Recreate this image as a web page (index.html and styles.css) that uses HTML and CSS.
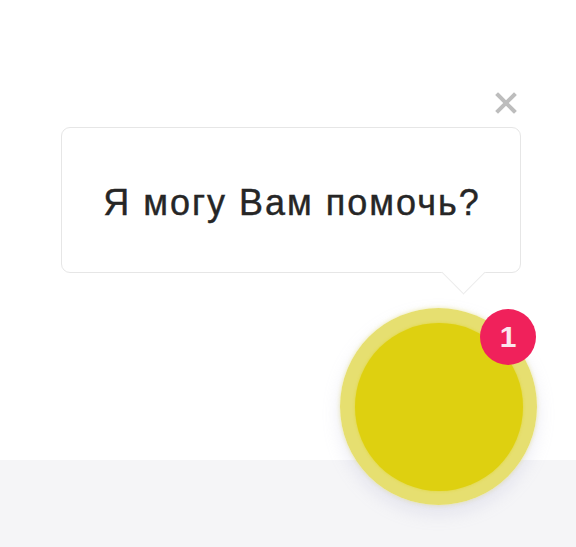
FILE: index.html
```html
<!DOCTYPE html>
<html lang="ru">
<head>
<meta charset="utf-8">
<link rel="stylesheet" href="styles.css">
</head>
<body>
<div class="page">
  <div class="top"></div>
  <div class="band"></div>
</div>
<div class="widget">
  <svg class="close" width="22" height="22" viewBox="0 0 22 22"><path d="M3 3L19 19M19 3L3 19" stroke="#bdbdbd" stroke-width="4" stroke-linecap="square"/></svg>
  <div class="bubble">Я могу Вам помочь?</div>
  <div class="btn">
    <div class="core"></div>
    <div class="badge">1</div>
  </div>
</div>
</body>
</html>
```
FILE: styles.css
```css
html, body { margin: 0; padding: 0; }
body { width: 576px; height: 547px; overflow: hidden; background: #fff; font-family: "Liberation Sans", Arial, sans-serif; position: relative; }
.page { display: flex; flex-direction: column; height: 547px; }
.top { height: 460px; background: #fff; }
.band { flex: 1; background: #f5f5f7; }
.widget { position: absolute; left: 0; top: 0; width: 576px; height: 547px; }
.close { position: absolute; left: 495px; top: 92px; }
.bubble {
  position: absolute; left: 61px; top: 127px; width: 460px; height: 146px;
  border: 1.5px solid #e6e6e6; border-radius: 9px; background: #fff;
  display: flex; align-items: center; justify-content: center;
  font-size: 36px; letter-spacing: 2px; color: #262626;
  -webkit-text-stroke: 0.4px #262626;
  box-sizing: border-box; padding-top: 6px; padding-left: 2px;
}
.bubble::after {
  content: ""; position: absolute; left: 386px; bottom: -16px;
  width: 30px; height: 30px; background: #fff;
  border-right: 1.5px solid #ececec; border-bottom: 1.5px solid #ececec;
  transform: rotate(45deg);
}
.btn {
  position: absolute; left: 340px; top: 308px; width: 197px; height: 197px;
  border-radius: 50%; background: radial-gradient(circle, #e6df70 80%, #ebe69a 92%, #f3f0c8 100%);
  box-shadow: 0 8px 18px rgba(160,160,200,0.22), 0 0 4px rgba(235,230,140,0.7);
}
.core {
  position: absolute; left: 15px; top: 15px; width: 168px; height: 168px;
  border-radius: 50%; background: #ded010;
  box-shadow: 0 0 3px rgba(222,208,16,0.6);
}
.badge {
  position: absolute; left: 140px; top: 1px; width: 56px; height: 56px;
  border-radius: 50%; background: #f0215b; color: #fbe6ee;
  display: flex; align-items: center; justify-content: center;
  font-size: 30px; font-weight: bold;
}
```
